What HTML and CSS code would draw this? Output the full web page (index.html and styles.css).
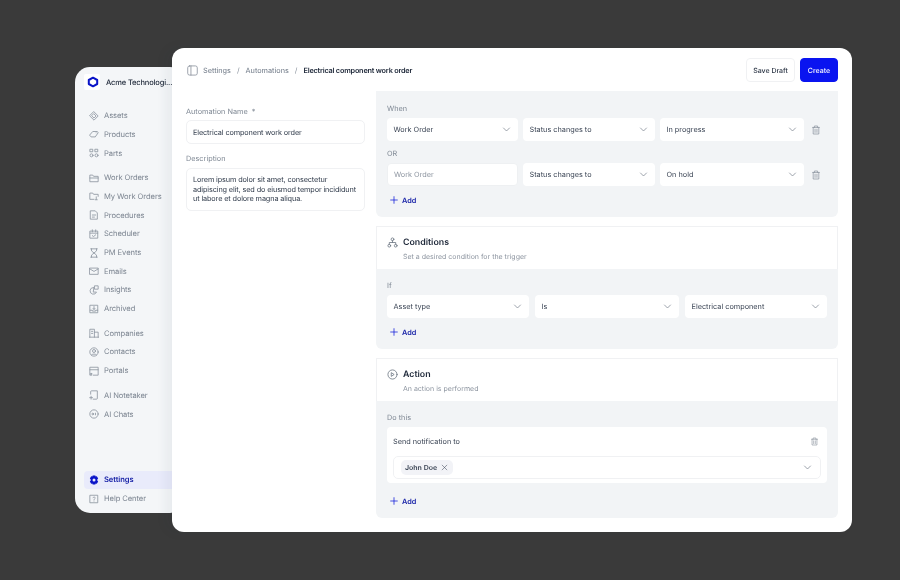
FILE: index.html
```html
<!DOCTYPE html>
<html lang="en">
<head>
<meta charset="utf-8">
<title>Automation</title>
<link rel="stylesheet" href="styles.css">
</head>
<body>
<svg class="defs" width="0" height="0" aria-hidden="true">
  <symbol id="chev" viewBox="0 0 12 12"><path d="M2 4l4 4 4-4"/></symbol>
  <symbol id="trash" viewBox="0 0 10 12"><path d="M.8 2.800h8.400M3 2.800V1h4v1.800M1.500 2.800V11h7V2.800M3.800 5v4M6.200 5v4"/></symbol>
  <symbol id="plus" viewBox="0 0 12 12"><path d="M6 1v10M1 6h10"/></symbol>
</svg>

<aside class="sidebar">
  <div class="brand">
    <span class="logo"><svg viewBox="0 0 16 16"><path d="M4.800 6L9 3.700 13.200 6v4L9 12.300 4.800 10z"/></svg></span>
    <span class="brand-name">Acme Technologi...</span>
  </div>
  <nav class="nav">
    <div class="group">
      <a class="item"><svg viewBox="0 0 12 12"><path d="M6 1l5 5-5 5-5-5zM6 3.500L8.500 6 6 8.500 3.500 6z"/></svg>Assets</a>
      <a class="item"><svg viewBox="0 0 12 12"><path d="M1 7l3.500-4H10l1 1.500L7.500 9.500H3zM8.500 4.500h.01"/></svg>Products</a>
      <a class="item"><svg viewBox="0 0 12 12"><circle cx="3" cy="8.800" r="1.800"/><circle cx="9" cy="8.800" r="1.800"/><path d="M1.500 1.500h3v3h-3zM7.500 1.500h3v3h-3z"/></svg>Parts</a>
    </div>
    <div class="group">
      <a class="item"><svg viewBox="0 0 12 12"><path d="M1 10V2.500h3.500L5.500 4H11v6zM1 6h10"/></svg>Work Orders</a>
      <a class="item"><svg viewBox="0 0 12 12"><path d="M6 10H1V2.500h3.500L5.500 4H11v2.500M8.700 7v3M7.500 10.500h2.400"/></svg>My Work Orders</a>
      <a class="item"><svg viewBox="0 0 12 12"><path d="M2 1h5.500L10 3.500V11H2zM4 6h4M4 8.500h2.500"/></svg>Procedures</a>
      <a class="item"><svg viewBox="0 0 12 12"><path d="M1.500 2.500h9V11h-9zM1.500 5h9M4 1v2.500M8 1v2.500M4 8l1.500 1L8 7"/></svg>Scheduler</a>
      <a class="item"><svg viewBox="0 0 12 12"><path d="M2 1h8M2 11h8M3 1v2.500L9 8.500V11M9 1v2.500L3 8.500V11"/></svg>PM Events</a>
      <a class="item"><svg viewBox="0 0 12 12"><path d="M1 2.500h10v7.500H1zM1 3.500l5 3 5-3"/></svg>Emails</a>
      <a class="item"><svg viewBox="0 0 12 12"><path d="M5.500 3a4 4 0 1 0 3.500 5.500H5.500zM7 1h4v4H7z"/></svg>Insights</a>
      <a class="item"><svg viewBox="0 0 12 12"><path d="M1.500 1.500h9v9h-9zM1.500 7.500H4v1h4v-1h2.500M6 3v3.500M4.800 5.300L6 6.500l1.200-1.200"/></svg>Archived</a>
    </div>
    <div class="group">
      <a class="item"><svg viewBox="0 0 12 12"><path d="M1 11V1.500h5.500V11M6.500 5H11v6M0 11h12M3 4h1.500M3 6.500h1.500"/></svg>Companies</a>
      <a class="item"><svg viewBox="0 0 12 12"><circle cx="6" cy="6" r="5"/><circle cx="6" cy="4.800" r="1.800"/><path d="M3 9.500c.8-1.500 5.200-1.500 6 0"/></svg>Contacts</a>
      <a class="item"><svg viewBox="0 0 12 12"><path d="M3 11H1V1.500h10V11H5M1 4.500h10"/><circle cx="2.500" cy="9.500" r=".8"/></svg>Portals</a>
    </div>
    <div class="group">
      <a class="item"><svg viewBox="0 0 12 12"><path d="M2 5V2a1 1 0 0 1 1-1h7v9a1 1 0 0 1-1 1H5M2.500 7.500v3.500M.8 9.200h3.400"/></svg>AI Notetaker</a>
      <a class="item"><svg viewBox="0 0 12 12"><circle cx="6" cy="6" r="5"/><circle cx="4.500" cy="6" r="1"/><path d="M7.800 5v2"/></svg>AI Chats</a>
    </div>
  </nav>
  <div class="nav-bottom">
    <a class="item active"><svg viewBox="0 0 12 12"><path class="gear" fill-rule="evenodd" d="M4.400.5h3.200l.4 1.300 1.400-.3 1.600 2.700-1 1v1.600l1 1-1.600 2.700-1.400-.3-.4 1.300H4.400l-.4-1.300-1.400.3L1 7.800l1-1V5.200l-1-1 1.600-2.700 1.400.3zM6 4.200a1.800 1.800 0 1 0 0 3.600 1.800 1.800 0 0 0 0-3.600z"/></svg>Settings</a>
    <a class="item"><svg viewBox="0 0 12 12"><path d="M1.500 1.500h9v9h-9zM4.700 4.500C5 3.300 7.500 3.400 7.500 4.800 7.500 5.800 6 5.800 6 7M6 8.500h.01"/></svg>Help Center</a>
  </div>
</aside>

<main class="window">
  <header class="topbar">
    <div class="crumbs">
      <svg class="panel-icon" viewBox="0 0 12 12"><rect x=".8" y="1" width="10.400" height="10" rx="2"/><path d="M4.300 1v10"/></svg>
      <span class="crumb">Settings</span><span class="sep">/</span>
      <span class="crumb">Automations</span><span class="sep">/</span>
      <span class="crumb current">Electrical component work order</span>
    </div>
    <div class="actions">
      <button class="btn">Save Draft</button>
      <button class="btn primary">Create</button>
    </div>
  </header>

  <div class="content">
    <section class="form">
      <label class="label">Automation Name <span class="star">*</span></label>
      <div class="input name">Electrical component work order</div>
      <label class="label">Description</label>
      <div class="input area">Lorem ipsum dolor sit amet, consectetur adipiscing elit, sed do eiusmod tempor incididunt ut labore et dolore magna aliqua.</div>
    </section>

    <section class="builder">
      <div class="panel first">
        <div class="field-label">When</div>
        <div class="row">
          <div class="select w131">Work Order<svg class="chev"><use href="#chev"/></svg></div>
          <div class="select w132">Status changes to<svg class="chev"><use href="#chev"/></svg></div>
          <div class="select w144">In progress<svg class="chev"><use href="#chev"/></svg></div>
          <svg class="trash"><use href="#trash"/></svg>
        </div>
        <div class="field-label or">OR</div>
        <div class="row">
          <div class="select w131 placeholder">Work Order</div>
          <div class="select w132">Status changes to<svg class="chev"><use href="#chev"/></svg></div>
          <div class="select w144">On hold<svg class="chev"><use href="#chev"/></svg></div>
          <svg class="trash"><use href="#trash"/></svg>
        </div>
        <a class="add"><svg><use href="#plus"/></svg>Add</a>
      </div>

      <div class="block">
        <div class="block-head">
          <svg class="head-icon" viewBox="0 0 12 12"><circle cx="6" cy="2.500" r="1.500"/><circle cx="2.500" cy="9.500" r="1.500"/><circle cx="9.500" cy="9.500" r="1.500"/><path d="M6 4v2M2.500 8V6h7v2"/></svg>
          <div>
            <h2>Conditions</h2>
            <p>Set a desired condition for the trigger</p>
          </div>
        </div>
        <div class="panel">
          <div class="field-label">If</div>
          <div class="row wide">
            <div class="select">Asset type<svg class="chev"><use href="#chev"/></svg></div>
            <div class="select">Is<svg class="chev"><use href="#chev"/></svg></div>
            <div class="select">Electrical component<svg class="chev"><use href="#chev"/></svg></div>
          </div>
          <a class="add"><svg><use href="#plus"/></svg>Add</a>
        </div>
      </div>

      <div class="block">
        <div class="block-head">
          <svg class="head-icon" viewBox="0 0 12 12"><circle cx="6" cy="6" r="5"/><path d="M5 4.200L7.800 6 5 7.800z"/></svg>
          <div>
            <h2>Action</h2>
            <p>An action is performed</p>
          </div>
        </div>
        <div class="panel">
          <div class="field-label">Do this</div>
          <div class="do-card">
            <div class="do-top">Send notification to<svg class="trash small"><use href="#trash"/></svg></div>
            <div class="recipient">
              <span class="chip">John Doe<svg viewBox="0 0 12 12"><path d="M2 2l8 8M10 2l-8 8"/></svg></span>
              <svg class="chev"><use href="#chev"/></svg>
            </div>
          </div>
          <a class="add low"><svg><use href="#plus"/></svg>Add</a>
        </div>
      </div>
    </section>
  </div>
</main>
</body>
</html>
```

FILE: styles.css
```css
* { box-sizing: border-box; }
html, body { margin: 0; height: 100%; }
body {
  position: relative;
  width: 900px;
  height: 580px;
  overflow: hidden;
  background: #3a3a3a;
  font-family: "Inter", "Liberation Sans", sans-serif;
  font-size: 8px;
  color: #2f3a4a;
  text-rendering: geometricPrecision;
}
.defs { position: absolute; }
svg { fill: none; stroke: currentColor; stroke-width: .9; stroke-linecap: round; stroke-linejoin: round; flex: none; }

/* Sidebar window */
.sidebar {
  position: absolute;
  left: 75px;
  top: 67px;
  width: 110px;
  height: 446px;
  background: #f4f6f8;
  border-radius: 15px;
  padding: 7px 0 5px 9px;
  display: flex;
  flex-direction: column;
  will-change: transform;
}
.brand { display: flex; align-items: center; gap: 6px; height: 16px; white-space: nowrap; }
.logo { width: 16px; height: 16px; background: #fff; border-radius: 2px; display: flex; }
.logo svg { width: 16px; height: 16px; stroke: #0a14c8; stroke-width: 2; }
.brand-name { font-size: 7.500px; font-weight: 500; letter-spacing: -.15px; color: #1d2738; }
.nav { margin-top: 16.400px; display: flex; flex-direction: column; gap: 6px; }
.group { display: flex; flex-direction: column; }
.item {
  height: 18.700px;
  display: flex;
  align-items: center;
  gap: 5px;
  padding-left: 5px;
  font-size: 7.600px;
  letter-spacing: -.08px;
  color: #7c8591;
  white-space: nowrap;
}
.item svg { width: 10px; height: 10px; color: #8d95a0; stroke-width: 1; }
.nav-bottom { margin-top: auto; display: flex; flex-direction: column; }
.item.active {
  background: #e9ebfb;
  border-radius: 4px;
  color: #1a24a8;
  font-weight: 600;
}
.item.active svg { color: #0a14c8; }
.item.active .gear { fill: #0a14c8; stroke: none; }

/* Main window */
.window {
  position: absolute;
  left: 172px;
  top: 48px;
  width: 680px;
  height: 484px;
  background: #fff;
  border-radius: 12px;
  box-shadow: -6px 0 12px rgba(40, 50, 70, .06);
  overflow: hidden;
  display: flex;
  flex-direction: column;
  will-change: transform;
}
.topbar {
  height: 43px;
  padding: 10px 14px 9px 15px;
  display: flex;
  align-items: center;
  justify-content: space-between;
  flex: none;
}
.crumbs { display: flex; align-items: center; font-size: 7.300px; color: #6e7886; white-space: nowrap; }
.panel-icon { width: 11px; height: 11px; color: #8a929d; margin-right: 5px; }
.sep { margin: 0 6px; color: #8a929d; }
.current { color: #1d2738; font-weight: 600; letter-spacing: -.2px; }
.actions { display: flex; gap: 5px; }
.btn {
  height: 24px;
  border: 1px solid #f0f1f3;
  border-radius: 4px;
  background: #fff;
  padding: 0;
  width: 49px;
  font: 500 7px "Inter", "Liberation Sans", sans-serif;
  text-rendering: geometricPrecision;
  color: #2a3444;
}
.btn.primary { width: 38px; background: #0a14f0; border-color: #0a14f0; color: #fff; }

.content { flex: 1; display: flex; padding-left: 14px; min-height: 0; }
.form { width: 179px; padding-top: 16px; flex: none; }
.label { display: block; font-size: 7.300px; color: #7f8894; margin-bottom: 4px; line-height: 9px; }
.star { margin-left: 2px; }
.input {
  background: #fff;
  border: 1px solid #f0f1f3;
  border-radius: 5px;
  font-size: 7.300px;
  letter-spacing: -.12px;
  color: #2f3a4a;
  padding: 0 6px;
}
.name { height: 24px; line-height: 23px; margin-bottom: 10px; }
.area { height: 43px; margin-top: 5px; padding: 6px 6px; line-height: 9.700px; }

.builder { width: 462px; margin-left: 11px; flex: none; display: flex; flex-direction: column; gap: 9px; }
.panel { background: #f2f4f6; border-radius: 0 0 6px 6px; padding: 12px 11px 0; }
.panel.first { height: 126px; padding-top: 13px; }
.field-label { font-size: 7.300px; line-height: 9px; color: #7f8894; margin-bottom: 5px; }
.field-label.or { margin-top: 8px; margin-bottom: 5px; }
.row { display: flex; align-items: center; gap: 5px; height: 23px; }
.row.wide { display: grid; grid-template-columns: 142px 144px 142px; gap: 6px; }
.select {
  height: 23px;
  background: #fff;
  border-radius: 4px;
  padding: 0 6.500px;
  display: flex;
  align-items: center;
  justify-content: space-between;
  font-size: 7.300px;
  color: #3a4454;
  white-space: nowrap;
}
.w131 { width: 131px; }
.w132 { width: 132px; }
.w144 { width: 144px; }
.placeholder { color: #8d95a0; border: 1px solid #eef0f2; padding-left: 6px; }
.chev { width: 9px; height: 9px; color: #6f7884; margin-right: 1px; }
.trash { width: 8px; height: 10px; color: #8a929d; margin-left: 3px; }
.trash.small { width: 7px; height: 9px; margin: 0; }
.add {
  display: flex;
  align-items: center;
  gap: 4px;
  margin: 9px 0 0 3px;
  height: 10px;
  font-size: 7.300px;
  font-weight: 600;
  color: #1a24a8;
}
.add svg { width: 8px; height: 8px; stroke-width: 1.100; color: #0a14d8; }
.add.low { margin-top: 13px; }

.block { display: flex; flex-direction: column; }
.block:nth-child(2) .panel { height: 80px; }
.block:nth-child(3) .panel { height: 117px; }
.block-head {
  height: 43px;
  flex: none;
  background: #fff;
  border: 1px solid #f0f1f3;
  border-bottom: 0;
  display: flex;
  gap: 5px;
  padding: 10px 0 0 10px;
}
.head-icon { width: 11px; height: 11px; color: #6f7884; }
.block-head h2 { margin: 0 0 3.500px; font-size: 8.800px; line-height: 11px; font-weight: 600; color: #1d2738; }
.block-head p { margin: 0; font-size: 7px; line-height: 9px; color: #8d95a0; }

.do-card { height: 56px; background: #fff; border-radius: 4px; padding: 10px 6px 0; margin-top: 2px; }
.do-top { display: flex; justify-content: space-between; align-items: center; font-size: 7.300px; color: #3a4454; height: 9px; padding-right: 3px; }
.recipient {
  margin-top: 10px;
  height: 23px;
  border: 1px solid #f0f1f3;
  border-radius: 5px;
  display: flex;
  align-items: center;
  justify-content: space-between;
  padding: 0 7px 0 6.500px;
}
.chip {
  display: flex;
  align-items: center;
  gap: 4px;
  height: 15px;
  padding: 0 5px 0 4.500px;
  background: #f2f3f7;
  border-radius: 5px;
  font-size: 7px;
  font-weight: 600;
  color: #3a4454;
  white-space: nowrap;
}
.chip svg { width: 7px; height: 7px; color: #3a4454; }
```
